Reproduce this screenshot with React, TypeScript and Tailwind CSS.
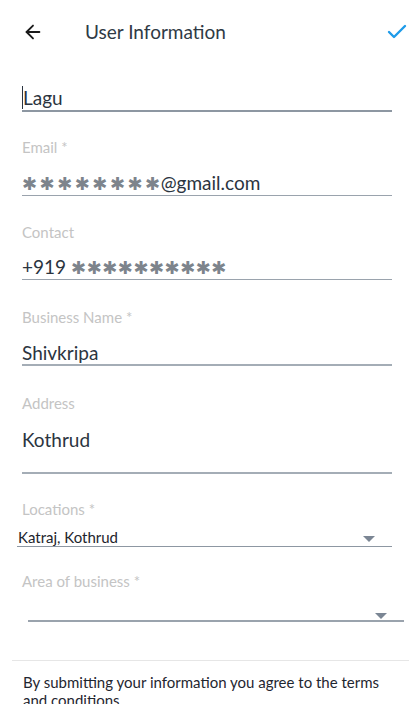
import { ArrowLeft, Check } from "lucide-react";

function Stars({ n, wide }: { n: number; wide?: boolean }) {
  return (
    <span
      className={
        wide
          ? "text-[#7d848c] text-[18px] tracking-[2.5px] font-['DejaVu_Sans',sans-serif]"
          : "text-[#7d848c] text-[18px] tracking-[0.5px] font-['DejaVu_Sans',sans-serif]"
      }
    >
      {"✱".repeat(n)}
    </span>
  );
}

function Label({ children }: { children: React.ReactNode }) {
  return <p className="text-[15px] leading-[20px] text-[#c4c4c4]">{children}</p>;
}

function Caret() {
  return (
    <svg width="12" height="6" viewBox="0 0 12 6" className="shrink-0">
      <path d="M0 0h12L6 6z" fill="#7b8694" />
    </svg>
  );
}

export default function App() {
  return (
    <div className="h-[720px] w-[419px] bg-white font-['Lato',sans-serif] text-[#2b3440] overflow-hidden">
      <div className="flex h-[64px] items-center px-[22px]">
        <ArrowLeft size={22} strokeWidth={2} className="text-[#1a1a1a]" />
        <h1 className="ml-[41px] text-[19px] text-[#2f3a45]">User Information</h1>
        <Check size={24} strokeWidth={2.4} className="ml-auto -mr-[12px] text-[#1e9be9]" />
      </div>

      <div className="flex flex-col pl-[22px] pr-[27px]">
        <div className="mt-[22px] border-b-2 border-[#8d97a2] text-[19px] leading-[24px]">
          <span className="border-l border-[#2b3440]">Lagu</span>
        </div>

        <div className="mt-[25px]">
          <Label>Email *</Label>
          <div className="mt-[14px] flex items-center h-[25px] border-b border-[#9aa3ad] text-[19px]">
            <Stars n={8} wide />
            <span className="-ml-[2px]">@gmail.com</span>
          </div>
        </div>

        <div className="mt-[26px]">
          <Label>Contact</Label>
          <div className="mt-[13px] flex items-center h-[25px] border-b border-[#9aa3ad] text-[19px]">
            <span className="mr-[5px]">+919</span>
            <Stars n={10} />
          </div>
        </div>

        <div className="mt-[27px]">
          <Label>Business Name *</Label>
          <div className="mt-[14px] h-[25px] border-b-2 border-[#a4adb6] text-[19px] leading-[24px]">Shivkripa</div>
        </div>

        <div className="mt-[27px]">
          <Label>Address</Label>
          <div className="mt-[15px] h-[46px] border-b-2 border-[#a4adb6] text-[19px] leading-[24px]">Kothrud</div>
        </div>

        <div className="mt-[25px]">
          <Label>Locations *</Label>
          <div className="-ml-[5px] mt-[10px] flex items-end justify-between border-b border-[#8d97a2] text-[15px] leading-[17px] text-[#1e242c]">
            <span className="ml-[1px]">Katraj, Kothrud</span>
            <span className="mr-[17px] mb-[4px]"><Caret /></span>
          </div>
        </div>

        <div className="mt-[24px]">
          <Label>Area of business *</Label>
          <div className="ml-[6px] -mr-[12px] mt-[21px] flex h-[10px] items-start justify-end border-b-2 border-[#9aa3ad]">
            <span className="mr-[17px] mt-[1px]"><Caret /></span>
          </div>
        </div>
      </div>

      <div className="mx-[12px] mt-[38px] border-t border-[#e6e6e6] w-[397px]" />
      <div className="h-[43px] overflow-hidden pl-[23px] pr-[12px] pt-[12px]">
        <p className="text-[15px] leading-[18px] text-[#1f2630]">
          By submitting your information you agree to the terms and conditions
        </p>
      </div>
    </div>
  );
}
